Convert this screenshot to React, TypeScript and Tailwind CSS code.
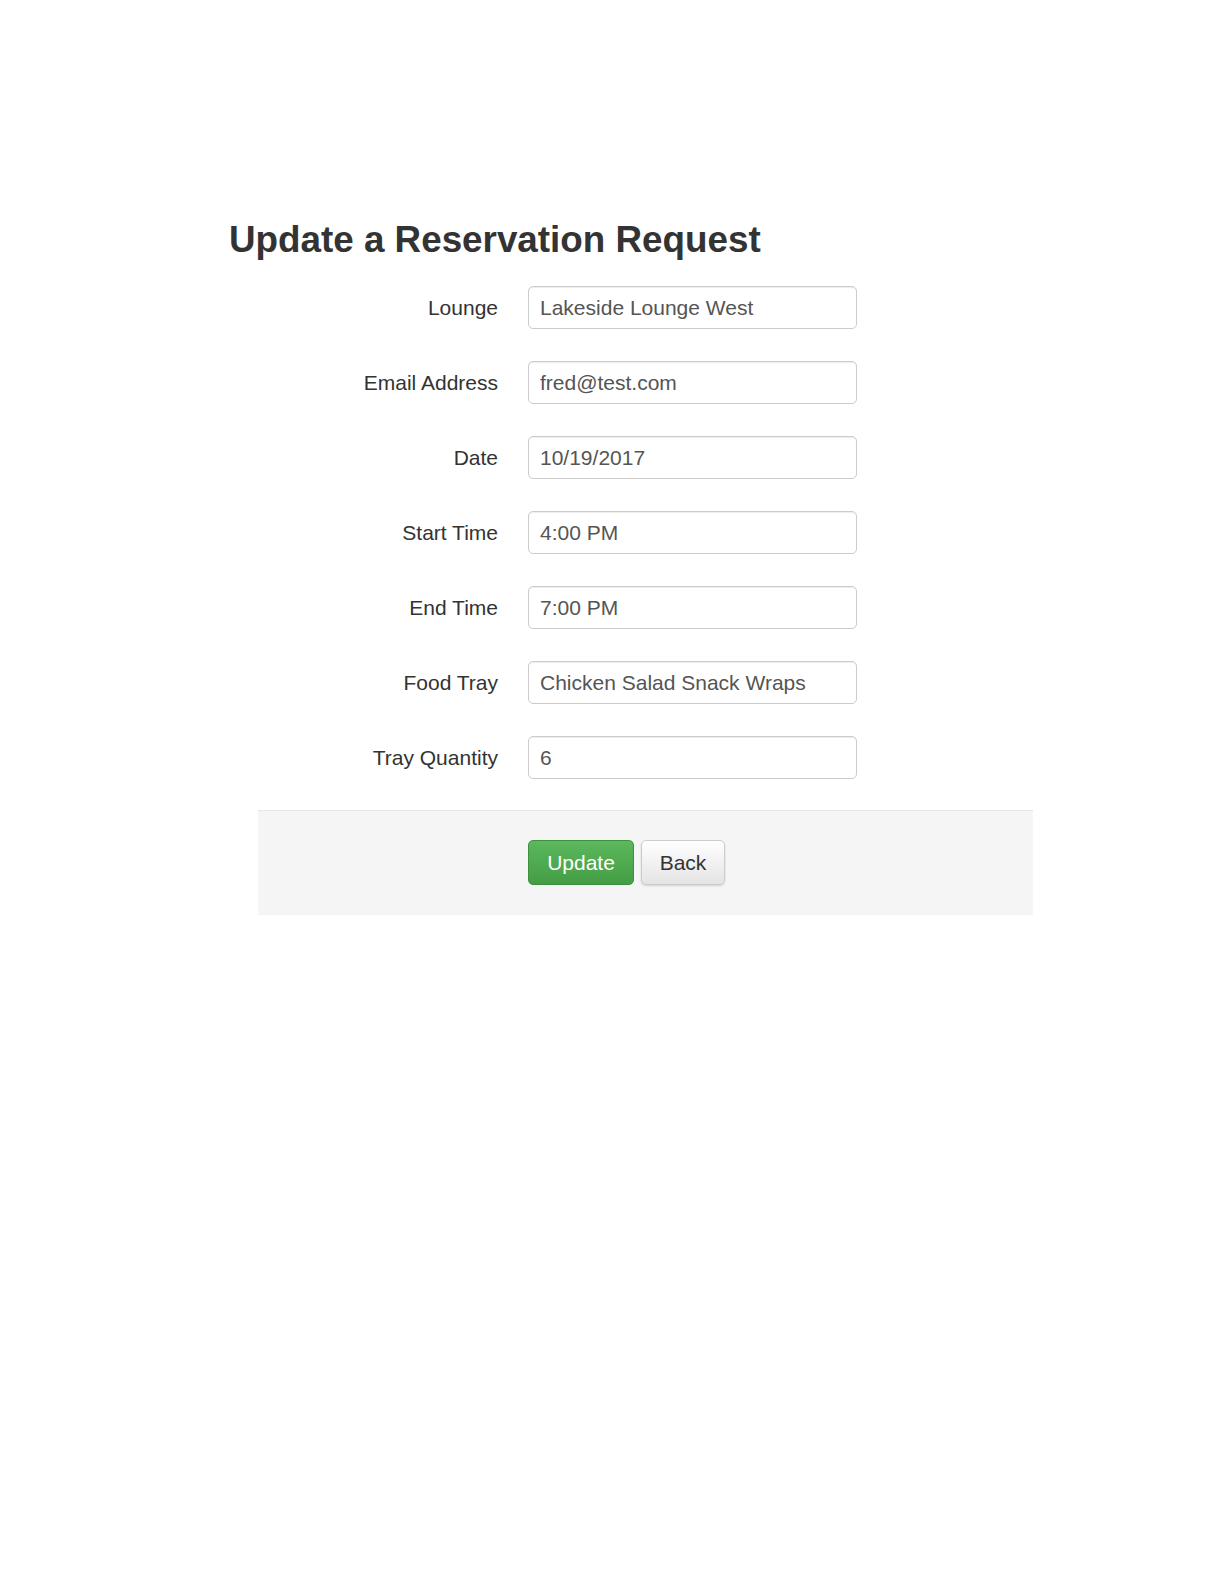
const fields = [
  { label: "Lounge", value: "Lakeside Lounge West" },
  { label: "Email Address", value: "fred@test.com" },
  { label: "Date", value: "10/19/2017" },
  { label: "Start Time", value: "4:00 PM" },
  { label: "End Time", value: "7:00 PM" },
  { label: "Food Tray", value: "Chicken Salad Snack Wraps" },
  { label: "Tray Quantity", value: "6" },
];

export default function App() {
  return (
    <div className="min-h-[1584px] bg-white pt-[219px] pl-[229px] font-['Liberation_Sans',Arial,sans-serif] text-[#333]">
      <h1 className="text-[36.8px] font-bold leading-[42px] text-[#333]">Update a Reservation Request</h1>

      <form className="ml-[29px] mt-[25px] w-[775px]">
        <div className="flex flex-col gap-[32px]">
          {fields.map((f) => (
            <div key={f.label} className="flex h-[43px] items-center">
              <label className="w-[240px] text-right text-[21px] leading-none text-[#333]">{f.label}</label>
              <input
                readOnly
                value={f.value}
                className="ml-[30px] h-[43px] w-[329px] rounded-[5px] border border-[#ccc] bg-white px-[11px] text-[21px] text-[#555] shadow-[inset_0_1px_1px_rgba(0,0,0,0.075)] outline-none"
              />
            </div>
          ))}
        </div>

        <div className="mt-[31px] flex h-[105px] gap-[7px] border-t border-[#e5e5e5] bg-[#f5f5f5] pt-[29px] pl-[270px]">
          <button
            type="button"
            className="h-[45px] w-[106px] rounded-[5px] border border-[#3e8f3e] bg-gradient-to-b from-[#5cb85c] to-[#449d44] text-[21px] text-white"
          >
            Update
          </button>
          <button
            type="button"
            className="h-[45px] w-[84px] rounded-[5px] border border-[#ccc] bg-gradient-to-b from-white to-[#e4e4e4] text-[21px] text-[#333] shadow-[0_1px_2px_rgba(0,0,0,0.15)]"
          >
            Back
          </button>
        </div>
      </form>
    </div>
  );
}
